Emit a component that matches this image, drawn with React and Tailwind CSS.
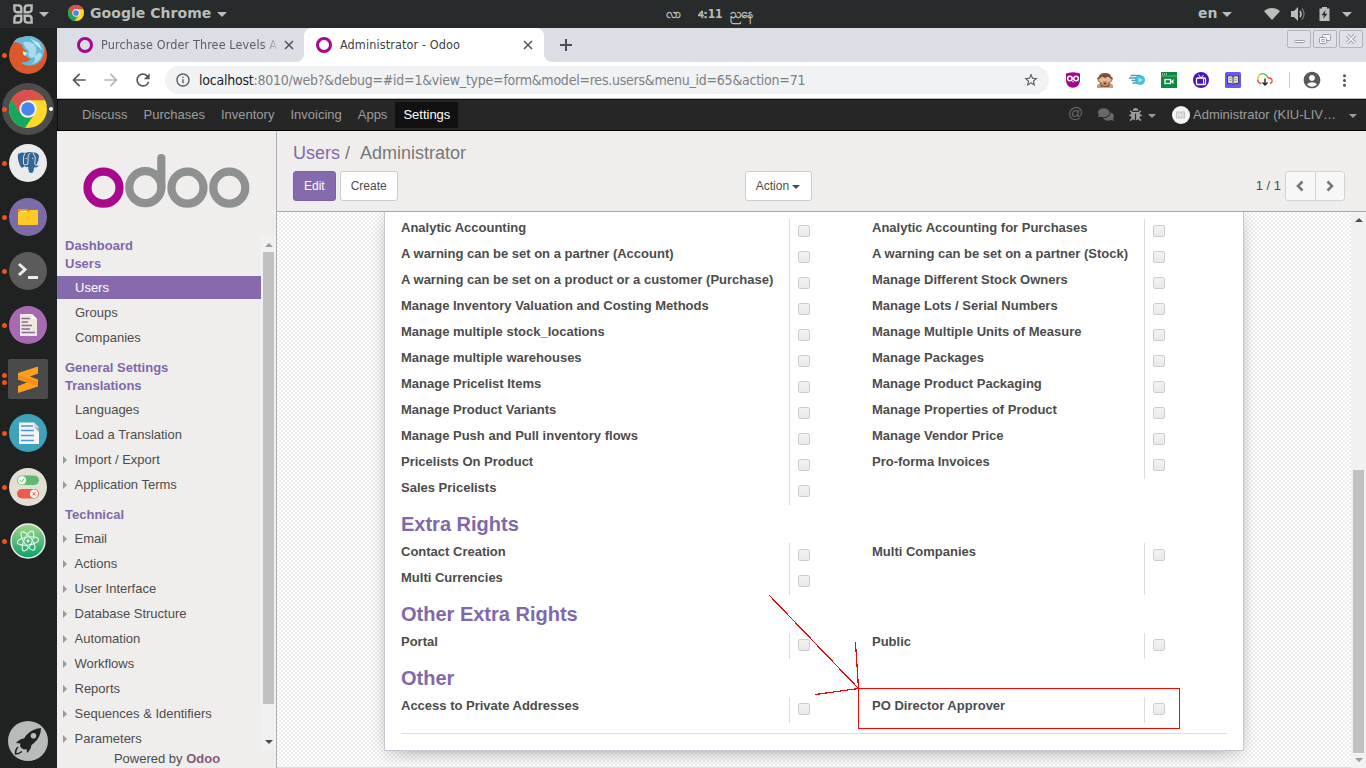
import React from "react";
import {
  MdArrowBack,
  MdArrowForward,
  MdRefresh,
  MdInfoOutline,
  MdStarBorder,
  MdAccountCircle,
  MdMoreVert,
} from "react-icons/md";
import { FaBug, FaComments } from "react-icons/fa";

function ChromeLogo({ className }) {
  return (
    <svg viewBox="0 0 48 48" className={className}>
      <circle cx="24" cy="24" r="24" fill="#fcd92b" />
      <path d="M24 24 L3.2 12 A24 24 0 0 0 20.2 47.7 L33 29.5 Z" fill="#16a85a" />
      <path d="M24 24 L13.6 30 L3.2 12 A24 24 0 0 1 45.5 13.2 L24 13.2 Z" fill="#d9514a" />
      <path d="M24 13.200 H45.500 A24 24 0 0 1 47.600 20 H34Z" fill="#fcd92b" />
      <circle cx="24" cy="24" r="11" fill="#f3f3f3" />
      <circle cx="24" cy="24" r="8.6" fill="#4a83ea" />
    </svg>
  );
}

function Caret({ className }) {
  return (
    <svg viewBox="0 0 8 4" className={className} fill="currentColor">
      <path d="M0 0H8L4 4Z" />
    </svg>
  );
}

function Cross({ className }) {
  return (
    <svg viewBox="0 0 10 10" className={className} fill="none" stroke="#55585d" strokeWidth="1.600">
      <path d="M1 1L9 9M9 1L1 9" />
    </svg>
  );
}

function TopBar() {
  return (
    <div className="flex h-7 shrink-0 items-center bg-[#272b2c] text-[#b9bdbb]">
      <div className="flex w-[430px] items-center pl-[13px] pb-[2px]">
        <svg viewBox="0 0 20 20" className="mt-[2px] h-5 w-5" fill="none" stroke="#b9bdbb" strokeWidth="2.4">
          <path d="M1.4 1.4H5.5A3 3 0 0 1 8.3 4.2V8.3H4.2A3 3 0 0 1 1.4 5.5Z" />
          <path d="M18.6 1.4H14.5A3 3 0 0 0 11.7 4.2V8.3H15.8A3 3 0 0 0 18.6 5.5Z" />
          <path d="M1.4 18.6H5.5A3 3 0 0 0 8.3 15.8V11.7H4.2A3 3 0 0 0 1.4 14.5Z" />
          <path d="M18.6 18.6H14.5A3 3 0 0 1 11.7 15.8V11.7H15.8A3 3 0 0 1 18.6 14.5Z" />
        </svg>
        <Caret className="ml-1.5 mt-[2px] h-[5px] w-[10px]" />
        <ChromeLogo className="ml-[19px] h-4 w-4" />
        <span className="ml-[6px] font-['DejaVu_Sans',sans-serif] text-sm leading-5 font-bold tracking-[0.05px]">
          Google Chrome
        </span>
        <Caret className="ml-[6px] mt-[2px] h-[5px] w-[10px]" />
      </div>
      <div className="flex flex-1 items-center pb-px pl-[236px] font-['DejaVu_Sans_Condensed','DejaVu_Sans',sans-serif] text-xs leading-5 font-bold whitespace-nowrap">
        <span className="w-8">လာ</span>
        <span className="w-8 tracking-[-0.3px]">4း11</span>
        <span>ညနေ</span>
      </div>
      <div className="flex w-[168px] items-center">
        <span className="pb-[2px] font-['DejaVu_Sans',sans-serif] text-sm leading-5 font-bold">en</span>
        <Caret className="ml-[5px] h-[5px] w-[10px]" />
        <svg viewBox="0 0 16 12" className="ml-8 h-3 w-4" fill="currentColor">
          <path d="M0 3.2C4.5-1 11.500-1 16 3.200L8 12Z" />
        </svg>
        <svg viewBox="0 0 16 16" className="ml-2.5 h-4 w-4" fill="currentColor">
          <path d="M1 5H4L8 1V15L4 11H1Z" />
          <path d="M10 5Q12 8 10 11" fill="none" stroke="currentColor" strokeWidth="1.6" />
          <path d="M12 2.500Q16 8 12 13.500" fill="none" stroke="#6c7070" strokeWidth="1.400" />
        </svg>
        <svg viewBox="0 0 11 14" className="ml-[13px] h-[14px] w-[11px]">
          <path d="M3 0H8V1.500H10.500V14H.5V1.500H3Z" fill="currentColor" />
          <path d="M6.500 3L2.500 8.200H5L4.200 11.800L8.500 6.800H5.800Z" fill="#272b2c" />
        </svg>
        <Caret className="ml-[12px] h-[5px] w-[10px]" />
      </div>
    </div>
  );
}

function Dots({ double }) {
  return (
    <span className="flex w-[9px] shrink-0 flex-col items-center gap-0.5">
      <span className="h-[5px] w-[5px] rounded-full bg-[#e95420]" />
      {double && <span className="h-[5px] w-[5px] rounded-full bg-[#e95420]" />}
    </span>
  );
}

const dockIcons = [
  <svg viewBox="0 0 40 40" className="h-10 w-10">
    <circle cx="20" cy="20" r="19" fill="#d9592a" />
    <path d="M5 8Q8 2 15 2Q24-1 31 5Q38 11 36 17Q35 25 30 28Q25 32 17 30Q14 29 13 27Q19 28 23 24Q20 24 18 21Q16 18 19 16Q15 15 14 10Q9 6 5 8Z" fill="#62b9d8" />
    <path d="M15 7Q21 6 26 9Q30 14 27 21Q32 15 34 20Q32 27 24 29Q29 24 26 22Q22 24 20 20L21 16Q17 13 15 7Z" fill="#a9dcee" />
    <path d="M22 3L27 6L31 8L34 15L28 10Z" fill="#c6e8f3" />
    <path d="M15 16L19 18L17 21L15 19Z" fill="#f6e7dc" />
  </svg>,
  <ChromeLogo className="ml-[2px] h-[38px] w-[38px]" />,
  <svg viewBox="0 0 40 40" className="h-10 w-10">
    <circle cx="20" cy="20" r="19" fill="#ebebeb" />
    <path d="M10 11Q13 8.500 17 10Q21 8.500 25 9.500Q30 9 31 13Q31 18 28 22.500Q30 23 31 22.300Q30 25 26 24.500L25.500 28Q25 30.500 22.500 30Q20.500 29.500 20.500 27L20 23.500Q18 25 16.500 23Q14 26 12.500 23.500Q9 16 10 11Z" fill="#336791" />
    <path d="M17 10.500Q15 13 15.500 17L15.500 21Q17 22.500 19.500 21.500M19.500 21.500Q20.500 18 20 15Q20 11.500 22 10M25 10Q28.500 14 27 18.500Q26 21.500 28 22.500M17.500 15.500H18.700M24 15.300H25.300" fill="none" stroke="#e4ebf0" strokeWidth=".9" />
  </svg>,
  <svg viewBox="0 0 40 40" className="h-10 w-10">
    <circle cx="20" cy="20" r="19" fill="#7b6ca8" />
    <path d="M10 13Q10 12 11 12H19L21 13.500H30V24H10Z" fill="#ff9100" />
    <path d="M10 15H20L22 13H30V27Q30 28 29 28H11Q10 28 10 27Z" fill="#ffca28" />
    <path d="M12 14.500H19" stroke="#fff" strokeWidth="1.200" />
  </svg>,
  <svg viewBox="0 0 40 40" className="h-10 w-10">
    <circle cx="20" cy="20" r="19" fill="#5b5b5b" />
    <path d="M11 13L17 18.500L11 24" fill="none" stroke="#ececec" strokeWidth="3" />
    <path d="M20 26.500H30" stroke="#ececec" strokeWidth="3" />
  </svg>,
  <svg viewBox="0 0 40 40" className="h-10 w-10">
    <circle cx="20" cy="20" r="19" fill="#a769b0" />
    <path d="M12 9H24L29 14V31H12Z" fill="#eceae0" />
    <path d="M24 9V14H29Z" fill="#fff" />
    <path d="M13.500 13.500H22M13.500 17H20M13.500 20.500H24M13.500 24H22M13.500 27.500H27" stroke="#8b6a93" strokeWidth="1.500" />
  </svg>,
  <svg viewBox="0 0 40 40" className="h-10 w-10">
    <rect width="40" height="40" rx="2" fill="#4a4a4a" />
    <path d="M10 14L30 7.500V14.500L22 17.500L30 20.500V27.500L10 34V27L19 23.500L10 20.500Z" fill="#ff9f1f" />
    <path d="M10 20.500V16L30 22.500V27L26 25.800Z" fill="#f58f1a" />
  </svg>,
  <svg viewBox="0 0 40 40" className="h-10 w-10">
    <circle cx="20" cy="20" r="19" fill="#3ea2b8" />
    <path d="M11 9.500H26L31 14.500V31H11Z" fill="#f3f5f7" />
    <path d="M26 9.500V14.500H31Z" fill="#d4d8db" />
    <path d="M31 14.500V19L26.500 14.500Z" fill="#a8adb0" />
    <path d="M13 13H25M13 17.500H26M13 22.500H26M13 27.500H26" stroke="#5294e2" strokeWidth="1.700" />
  </svg>,
  <svg viewBox="0 0 40 40" className="h-10 w-10">
    <circle cx="20" cy="20" r="19" fill="#e1e0d3" />
    <rect x="9" y="8.500" width="22" height="9.500" rx="4.750" fill="#5fba6d" />
    <circle cx="14" cy="13.200" r="4.200" fill="#f4f4f0" />
    <path d="M12 13.200L13.500 14.800L16.200 11.800" fill="none" stroke="#5fba6d" strokeWidth="1" />
    <rect x="9" y="22" width="22" height="9.500" rx="4.750" fill="#ed5a50" />
    <circle cx="26" cy="26.800" r="4.200" fill="#f4f4f0" />
    <path d="M24.500 25.300L27.500 28.300M27.500 25.300L24.500 28.300" stroke="#ed5a50" strokeWidth="1" />
  </svg>,
  <svg viewBox="0 0 40 40" className="h-10 w-10">
    <defs>
      <linearGradient id="atomGreen" x1="0" y1="0" x2="0" y2="1">
        <stop offset="0" stopColor="#a5d78b" />
        <stop offset="1" stopColor="#0ba069" />
      </linearGradient>
    </defs>
    <circle cx="20" cy="20" r="17" fill="url(#atomGreen)" stroke="#eef2ee" strokeWidth="1.400" />
    <g fill="none" stroke="#e8f7ee" strokeWidth="1.100">
      <ellipse cx="20" cy="20" rx="10.800" ry="4" transform="rotate(-8 20 20)" />
      <ellipse cx="20" cy="20" rx="10.800" ry="4" transform="rotate(55 20 20)" />
      <ellipse cx="20" cy="20" rx="10.800" ry="4" transform="rotate(115 20 20)" />
    </g>
    <circle cx="20" cy="20" r="1.400" fill="#fff" />
  </svg>,
];

function Dock() {
  return (
    <div className="flex w-[57px] shrink-0 flex-col overflow-hidden bg-[#1f2221]">
      {dockIcons.map((icon, i) =>
        i === 1 ? (
          <div key={i} className="flex h-[54px] shrink-0 items-center">
            <div className="ml-[2px] flex h-[52px] w-[52px] shrink-0 items-center rounded-full bg-[#4b4c4b]">
              <span className="h-[5px] w-[5px] shrink-0 rounded-full bg-[#e95420]" />
              {icon}
              <span className="ml-[2px] h-1 w-1 shrink-0 rounded-full bg-white" />
            </div>
          </div>
        ) : (
          <div key={i} className="flex h-[54px] shrink-0 items-center">
            <Dots double={i === 6} />
            <span className="-ml-[1px] flex h-10 w-10 items-center justify-center">{icon}</span>
          </div>
        )
      )}
      <div className="mt-auto flex justify-start pb-[7px] pl-2">
        <svg viewBox="0 0 40 40" className="h-10 w-10">
          <circle cx="20" cy="20" r="20" fill="#b9bbba" />
          <path d="M33 7Q24 7.500 18 14.500L16 17.500Q12 17.500 8 22L12.500 22.500L12 25Q13 28 16 28.500L18.500 28L19 32Q23 28.500 23.500 24L26 22Q33 16 33 7Z" fill="#1f2221" />
          <circle cx="25.500" cy="14.800" r="2.800" fill="#b9bbba" />
          <path d="M10 26Q7 29 7.500 33Q11 33 14 30.500" fill="none" stroke="#1f2221" strokeWidth="1.400" />
        </svg>
      </div>
    </div>
  );
}

function OdooDot() {
  return <span className="h-4 w-4 shrink-0 rounded-full border-[3.5px] border-[#a9078c]" />;
}

function WinButton({ children }) {
  return (
    <span className="flex h-[18px] w-6 items-center justify-center rounded-[2px] border border-[#b2b4bb] bg-[#dfe1e8]">
      {children}
    </span>
  );
}

function TabStrip() {
  return (
    <div className="flex h-[34px] shrink-0 items-start bg-white">
      <div className="flex h-[34px] w-[247px] items-center rounded-br-lg bg-[#dcdee6] pl-5 font-['DejaVu_Sans_Condensed','DejaVu_Sans',sans-serif] text-[12.5px] tracking-[0.12px] text-[#5d6066]">
        <OdooDot />
        <span className="ml-2 w-[179px] whitespace-nowrap [mask-image:linear-gradient(to_right,black_90%,transparent_100%)]">
          Purchase Order Three Levels A
        </span>
        <Cross className="ml-[4px] h-2.5 w-2.5 shrink-0" />
      </div>
      <div className="h-[34px] w-60 shrink-0 bg-[#dcdee6]">
        <div className="flex h-[34px] items-center rounded-t-lg bg-white pl-3 font-['DejaVu_Sans_Condensed','DejaVu_Sans',sans-serif] text-[12.5px] tracking-[0.12px] text-[#3c4043]">
          <OdooDot />
          <span className="ml-2 w-[183px] whitespace-nowrap">Administrator - Odoo</span>
          <Cross className="h-2.5 w-2.5 shrink-0" />
        </div>
      </div>
      <div className="flex h-[34px] flex-1 items-center rounded-bl-lg bg-[#dcdee6] pl-4">
        <svg viewBox="0 0 12 12" className="h-3 w-3" stroke="#4b4e53" strokeWidth="2">
          <path d="M6 0V12M0 6H12" />
        </svg>
        <div className="mr-[3px] ml-auto flex gap-0.5 self-start pt-[2px]">
          <WinButton>
            <span className="mt-1 h-[3px] w-[11px] rounded-sm border border-[#9a9ca3] bg-white" />
          </WinButton>
          <WinButton>
            <svg viewBox="0 0 12 10" className="h-2.5 w-3" fill="#f6f6f8" stroke="#9a9ca3">
              <rect x="3.500" y=".5" width="8" height="6" rx="1" />
              <rect x=".5" y="3.500" width="7" height="6" rx="1" />
              <rect x="3" y="5.500" width="2" height="2" />
            </svg>
          </WinButton>
          <WinButton>
            <svg viewBox="0 0 12 10" className="h-2.5 w-3">
              <path d="M2 1L10 9M10 1L2 9" stroke="#9a9ca3" strokeWidth="3.400" />
              <path d="M2 1L10 9M10 1L2 9" stroke="#fafafa" strokeWidth="1.600" />
            </svg>
          </WinButton>
        </div>
      </div>
    </div>
  );
}

function Extensions() {
  return (
    <div className="ml-[16px] flex items-center gap-4">
      <svg viewBox="0 0 16 16" className="h-4 w-4">
        <path d="M1 1.500L4 .8Q8-.5 12 .8L15 1.500V9Q14 15.800 8 15.800Q2 15.800 1 9Z" fill="#a9058c" />
        <g fill="#a9058c" stroke="#fff" strokeWidth="1.500">
          <circle cx="4.900" cy="6.500" r="2.300" />
          <circle cx="11.100" cy="6.500" r="2.300" />
        </g>
        <path d="M7.200 9H8.800L8 11Z" fill="#fff" />
      </svg>
      <svg viewBox="0 0 16 16" className="h-4 w-4">
        <path d="M1.500 5Q3 .5 8 1Q13 .5 14.500 5L16 6L15 9L12.500 11L16 13.500V15.500H0V13.500L3.500 11L1 9L0 6Z" fill="#8a5a44" />
        <ellipse cx="8" cy="6" rx="5.500" ry="3.500" fill="#70483a" />
        <path d="M1 8L5 4.500L8 6L11 4.500L15 8L12 10.500L8 9L4 10.500Z" fill="#e3b98d" />
        <ellipse cx="8" cy="11.500" rx="3.500" ry="2.200" fill="#d8a77b" />
        <ellipse cx="8" cy="11.500" rx="1.800" ry="1.100" fill="#5e3b2d" />
        <path d="M0 13L3 12L4.500 15.500H0ZM16 13L13 12L11.500 15.500H16Z" fill="#c9986c" />
      </svg>
      <svg viewBox="0 0 16 16" className="h-4 w-4">
        <circle cx="11" cy="8" r="5" fill="#41c1e0" />
        <path d="M1.500 3.500H11M0 6H7M2.500 8.500H7M3.500 11H8" stroke="#4a9fba" strokeWidth="1.400" />
        <path d="M9.500 5.500L14 8L9.500 10.500Z" fill="#a6e8f7" />
      </svg>
      <svg viewBox="0 0 16 16" className="h-4 w-4">
        <rect width="16" height="16" fill="#0b8a3f" />
        <path d="M1 2H2M3 2H4M5 2H6" stroke="#fff" />
        <path d="M0 4H16" stroke="#7bc594" strokeWidth=".8" />
        <rect x="4" y="7.500" width="5.500" height="4" fill="none" stroke="#fff" strokeWidth="1.300" />
        <path d="M9.500 9.500L12.500 7V12Z" fill="#fff" />
      </svg>
      <svg viewBox="0 0 16 16" className="h-4 w-4">
        <circle cx="8" cy="8" r="8" fill="#4a12c0" />
        <rect x="3.500" y="6" width="9" height="6.500" rx="1" fill="none" stroke="#fff" strokeWidth="1.300" />
        <path d="M8 6L5.500 2.500M8 6L10.500 3M10.500 7V12" stroke="#fff" strokeWidth="1" />
      </svg>
      <svg viewBox="0 0 16 16" className="h-4 w-4">
        <rect width="16" height="16" rx="1.500" fill="#6459f5" />
        <path d="M2.500 4Q5.500 3 8 4.500Q10.500 3 13.500 4V11.500Q10.500 10.800 8 12.500Q5.500 10.800 2.500 11.500Z" fill="#dcd9d0" stroke="#34323f" strokeWidth=".9" />
        <path d="M8 4.500V12" stroke="#34323f" strokeWidth=".9" />
        <path d="M4.500 6.500H6.500M4.500 8.500H6.500M9.500 6.500H11.500M9.500 8.500H11.500" stroke="#77747c" strokeWidth=".7" />
      </svg>
      <svg viewBox="0 0 16 16" className="h-4 w-4" fill="none" strokeWidth="1.400">
        <path d="M4.500 11.500Q.5 11 .8 7.500" stroke="#e5484a" />
        <path d="M.8 7.500Q.5 4 3 2.500" stroke="#e6c229" />
        <path d="M3 2.500Q6 .5 9 3Q10.500 4.500 11 6" stroke="#4cc23a" />
        <path d="M11 6Q14.500 5.500 15.200 8.500" stroke="#f0562b" />
        <path d="M15.200 8.500Q15.500 10.500 13 11.500" stroke="#e5484a" />
        <path d="M8 6.500V13M5.500 10.500L8 13L10.500 10.500" stroke="#222" strokeWidth="1.400" />
      </svg>
    </div>
  );
}

function Toolbar() {
  return (
    <div className="flex h-9 shrink-0 items-center bg-white pl-[12px] text-[#55585d]">
      <MdArrowBack className="h-5 w-5" />
      <MdArrowForward className="ml-[12px] h-5 w-5 text-[#b5b7ba]" />
      <MdRefresh className="ml-[12px] h-5 w-5" />
      <div className="ml-[12px] flex h-7 w-[884px] items-center rounded-full bg-[#f1f2f4] pr-[10px] pl-[10px]">
        <MdInfoOutline className="h-4 w-4 shrink-0" />
        <span className="ml-2 font-['DejaVu_Sans_Condensed','DejaVu_Sans',sans-serif] text-sm tracking-[-0.237px] whitespace-nowrap text-[#7c8085]">
          <span className="text-[#222427]">localhost</span>
          :8010/web?&amp;debug=#id=1&amp;view_type=form&amp;model=res.users&amp;menu_id=65&amp;action=71
        </span>
        <MdStarBorder className="ml-auto h-4 w-4" />
      </div>
      <Extensions />
      <span className="ml-4 h-4 w-px bg-[#c9cbce]" />
      <MdAccountCircle className="ml-3 h-5 w-5" />
      <MdMoreVert className="ml-[13px] h-[19px] w-[19px]" />
    </div>
  );
}

function NavBar() {
  const items = ["Discuss", "Purchases", "Inventory", "Invoicing", "Apps"];
  return (
    <div className="flex h-[33px] shrink-0 items-center border-t border-b border-t-[#b9bbb9] border-b-black bg-[#262626] pl-[17px] text-[13px] text-[#9d9d9d] shadow-[inset_0_1px_0_#0c0c0c,inset_1px_0_0_#0c0c0c]">
      {items.map((t) => (
        <span key={t} className="px-2 leading-[26px]">
          {t}
        </span>
      ))}
      <span className="bg-[#111] px-2 leading-[26px] text-white">Settings</span>
      <div className="ml-auto flex items-center pr-[9px]">
        <span className="w-[30px] pb-[3px] text-[15px] leading-[18px] text-[#6a6a6a]">@</span>
        <FaComments className="h-[15px] w-4 text-[#686868]" />
        <FaBug className="ml-[15px] h-[13px] w-[13px] text-[#9d9d9d]" />
        <Caret className="ml-[6px] mt-[2px] h-1 w-2" />
        <span className="ml-4 flex h-[18px] w-[18px] items-center justify-center rounded-full bg-[#f4f4f4]">
          <svg viewBox="0 0 10 8" className="h-2 w-2.5">
            <rect x=".5" y="1" width="8" height="6" fill="#e3e3e3" stroke="#c2c2c2" />
            <circle cx="4.500" cy="4" r="1.600" fill="#fafafa" stroke="#bbb" strokeWidth=".8" />
          </svg>
        </span>
        <span className="ml-[3px] w-[156px] leading-[18px]">Administrator (KIU-LIV…</span>
        <Caret className="mt-[2px] h-1 w-2" />
      </div>
    </div>
  );
}

const menu = [
  { title: "Dashboard", items: [] },
  { title: "Users", items: [["Users", 0, 1], ["Groups"], ["Companies"]] },
  { title: "General Settings", items: [] },
  { title: "Translations", items: [["Languages"], ["Load a Translation"], ["Import / Export", 1], ["Application Terms", 1]] },
  {
    title: "Technical",
    items: [
      ["Email", 1],
      ["Actions", 1],
      ["User Interface", 1],
      ["Database Structure", 1],
      ["Automation", 1],
      ["Workflows", 1],
      ["Reports", 1],
      ["Sequences & Identifiers", 1],
      ["Parameters", 1],
    ],
  },
];

function MenuItem({ label, expandable, active }) {
  if (active)
    return (
      <li className="h-[25px] py-px">
        <span className="block h-[23px] bg-[#856bad] pl-[18px] leading-[23px] text-white">{label}</span>
      </li>
    );
  return (
    <li className={"flex h-[25px] items-center " + (expandable ? "pl-[6px]" : "pl-[18px]")}>
      {expandable ? (
        <svg viewBox="0 0 4 8" className="mr-[7.5px] h-2 w-1" fill="#9a9a9a">
          <path d="M0 0L4 4L0 8Z" />
        </svg>
      ) : null}
      <span>{label}</span>
    </li>
  );
}

function Sidebar() {
  return (
    <div className="flex w-[220px] shrink-0 flex-col border-r border-[#afafb6] bg-[#f0eeed] text-[13px] text-[#4c4c4c]">
      <div className="flex h-[105px] shrink-0 justify-start pt-[22px] pl-[25px]">
        <svg viewBox="0 0 170 56" className="h-[56px] w-[170px]" fill="none" strokeWidth="8.200">
          <circle cx="21.500" cy="34.700" r="16" stroke="#a9078c" />
          <circle cx="63.300" cy="34.200" r="16" stroke="#8f9190" />
          <path d="M79.300 34.500V5.200" stroke="#8f9190" strokeLinecap="round" />
          <circle cx="105.500" cy="34.700" r="16" stroke="#8f9190" />
          <circle cx="147.300" cy="34.700" r="16" stroke="#8f9190" />
        </svg>
      </div>
      <div className="flex h-[514px] shrink-0 overflow-hidden">
        <div className="w-[204px]">
          {menu.map((s, i) => (
            <div key={s.title} className={i === 2 || i === 4 ? "pt-[8px]" : ""}>
              <div className="h-[18px] pt-px pl-2 leading-[18px] font-bold text-[#8068ac]">{s.title}</div>
              {s.items.length > 0 && (
                <ul className="pt-[3px]">
                  {s.items.map(([label, expandable, active]) => (
                    <MenuItem key={label} label={label} expandable={expandable} active={active} />
                  ))}
                </ul>
              )}
            </div>
          ))}
        </div>
        <div className="flex w-[15px] flex-col items-center bg-[#f1f1f1] pt-[7px] pb-1">
          <svg viewBox="0 0 8 4" className="h-1 w-2" fill="#9b9b9b">
            <path d="M0 4H8L4 0Z" />
          </svg>
          <div className="mt-[5px] h-[452px] w-[11px] bg-[#c1c1c1]" />
          <Caret className="mt-auto mb-[2px] h-1 w-2" />
        </div>
      </div>
      <div className="pt-px pl-px text-center leading-4">
        Powered by <b className="text-[#875a7b]">Odoo</b>
      </div>
    </div>
  );
}

function ControlPanel() {
  const btn = "flex h-[30px] items-center rounded-[3px] border text-xs ";
  return (
    <div className="h-[81px] shrink-0 border-b border-[#a8a8ac] bg-[#f0eeed] pt-[11px] pl-4 text-[#4c4c4c]">
      <div className="text-lg leading-[22px] text-[#777]">
        <span className="text-[#8068ac]">Users</span>
        <span className="pl-[5px]">/</span>
        <span className="pl-2.5">Administrator</span>
      </div>
      <div className="mt-[7px] flex items-center pr-[21px]">
        <span className={btn + "border-[#7c62a5] bg-[#856bad] px-2.5 text-white"}>Edit</span>
        <span className={btn + "ml-1 border-[#ccc] bg-white px-2.5"}>Create</span>
        <span className={btn + "ml-[347px] border-[#ccc] bg-white px-2.5 pr-[11px]"}>
          Action
          <Caret className="ml-[3px] mt-[2px] h-1 w-2" />
        </span>
        <span className="ml-auto text-[13px]">1 / 1</span>
        <span className="ml-1 flex h-[30px] w-[60px] rounded-[3px] border border-[#d2d2d2] bg-[#f7f7f7] text-[#777]">
          <span className="flex flex-1 items-center justify-center border-r border-[#d2d2d2]">
            <svg viewBox="0 0 8 12" className="h-3 w-2" fill="none" stroke="currentColor" strokeWidth="2.600">
              <path d="M6.500 1.500L2 6L6.500 10.500" />
            </svg>
          </span>
          <span className="flex flex-1 items-center justify-center">
            <svg viewBox="0 0 8 12" className="h-3 w-2" fill="none" stroke="currentColor" strokeWidth="2.600">
              <path d="M1.500 1.500L6 6L1.500 10.500" />
            </svg>
          </span>
        </span>
      </div>
    </div>
  );
}

const groups = [
  {
    left: [
      "Analytic Accounting",
      "A warning can be set on a partner (Account)",
      "A warning can be set on a product or a customer (Purchase)",
      "Manage Inventory Valuation and Costing Methods",
      "Manage multiple stock_locations",
      "Manage multiple warehouses",
      "Manage Pricelist Items",
      "Manage Product Variants",
      "Manage Push and Pull inventory flows",
      "Pricelists On Product",
      "Sales Pricelists",
    ],
    right: [
      "Analytic Accounting for Purchases",
      "A warning can be set on a partner (Stock)",
      "Manage Different Stock Owners",
      "Manage Lots / Serial Numbers",
      "Manage Multiple Units of Measure",
      "Manage Packages",
      "Manage Product Packaging",
      "Manage Properties of Product",
      "Manage Vendor Price",
      "Pro-forma Invoices",
    ],
  },
  { title: "Extra Rights", left: ["Contact Creation", "Multi Currencies"], right: ["Multi Companies", ""] },
  { title: "Other Extra Rights", left: ["Portal"], right: ["Public"] },
  { title: "Other", left: ["Access to Private Addresses"], right: ["PO Director Approver"] },
];

function Column({ rows, className }) {
  return (
    <div className={className}>
      {rows.map((label, i) => (
        <div key={i} className="flex h-[26px]">
          <span className="flex-1 leading-[18px]">{label}</span>
          <span className="flex w-[22px] border-l border-[#ddd] pt-[6px] pl-2">
            {label && (
              <span className="h-3 w-3 shrink-0 rounded-[2px] border border-[#cdcdcd] bg-linear-to-b from-[#f2f2f2] to-[#e9e9e9]" />
            )}
          </span>
        </div>
      ))}
    </div>
  );
}

function FormView() {
  return (
    <div className="flex min-h-0 flex-1">
      <div className="flex-1 border-b border-[#dcdcdc] bg-white bg-[repeating-conic-gradient(#eeeeee_0_25%,#ffffff_0_50%)] bg-[length:4px_4px] pl-[107px]">
        <div className="h-[539px] w-[860px] border-r border-b border-l border-[#c8c8d3] bg-white px-4 pt-[7px] text-[13px] font-bold text-[#4c4c4c] shadow-[0_5px_20px_-15px_rgba(0,0,0,0.6),0_4px_16px_rgba(0,0,0,0.14)] [clip-path:inset(0_-40px_-40px_-40px)]">
          {groups.map((g, i) => (
            <section key={i}>
              {g.title && <h2 className="flex h-[38px] items-center text-xl text-[#8068ac]">{g.title}</h2>}
              <div className="flex">
                <Column rows={g.left} className="w-[410px]" />
                <Column rows={g.right} className="ml-[61px] w-[294px]" />
              </div>
            </section>
          ))}
          <hr className="mt-[10px] border-[#ddd]" />
        </div>
      </div>
      <div className="flex w-[15px] flex-col items-center bg-[#f1f1f1] pt-[6px] pb-[6px] text-[#9b9b9b]">
        <svg viewBox="0 0 8 4" className="h-1 w-2" fill="#505050">
          <path d="M0 4H8L4 0Z" />
        </svg>
        <div className="mt-auto h-[283px] w-[11px] bg-[#c1c1c1]" />
        <Caret className="mt-[5px] h-1 w-2" />
      </div>
    </div>
  );
}

function Annotation() {
  return (
    <>
      <svg
        viewBox="0 0 90 101"
        className="pointer-events-none absolute top-[594px] left-[769px] h-[101px] w-[90px]"
        stroke="#ff0000"
        strokeWidth="1.200"
        shapeRendering="crispEdges"
      >
        <path d="M.5 1.500L89.500 94.500M86.500 48.500L89.500 94.500M46.500 100.500L89.500 94.500" fill="none" />
      </svg>
      <div className="pointer-events-none absolute top-[688px] left-[858px] h-[41px] w-[322px] border border-[#ff0000]" />
    </>
  );
}

export default function App() {
  return (
    <div className="relative flex h-[768px] w-[1366px] flex-col overflow-hidden font-['Liberation_Sans',Arial,sans-serif]">
      <TopBar />
      <div className="flex min-h-0 flex-1">
        <Dock />
        <div className="flex min-w-0 flex-1 flex-col">
          <TabStrip />
          <Toolbar />
          <NavBar />
          <div className="flex min-h-0 flex-1">
            <Sidebar />
            <div className="flex min-w-0 flex-1 flex-col">
              <ControlPanel />
              <FormView />
            </div>
          </div>
        </div>
      </div>
      <Annotation />
    </div>
  );
}
